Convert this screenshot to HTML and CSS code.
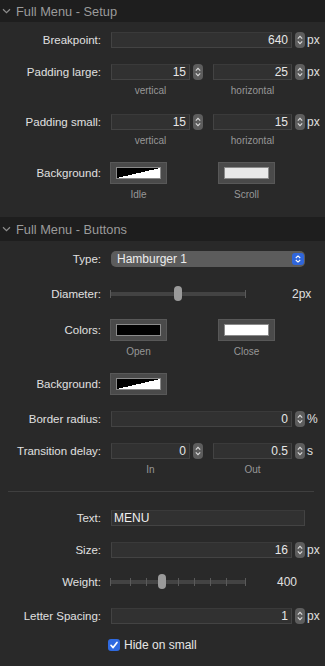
FILE: index.html
```html
<!DOCTYPE html>
<html>
<head>
<meta charset="utf-8">
<link rel="stylesheet" href="styles.css">
</head>
<body>
<div class="panel">
  <div class="header">
    <svg class="chev" width="9" height="6" viewBox="0 0 9 6"><path d="M1 1.2 L4.5 4.6 L8 1.2" fill="none" stroke="#8e8e8e" stroke-width="1.2"/></svg>
    <span>Full Menu - Setup</span>
  </div>
  <div class="section s1">
    <div class="row r-break">
      <div class="label">Breakpoint:</div>
      <div class="field wide">640</div>
      <svg class="stepper" width="10" height="16" viewBox="0 0 10 16"><rect width="10" height="16" rx="4" fill="#5d5d5d"/><path d="M2.8 6.6 L5 4.4 L7.2 6.6 M2.8 9.4 L5 11.6 L7.2 9.4" fill="none" stroke="#dcdcdc" stroke-width="1.1"/></svg>
      <span class="unit">px</span>
    </div>
    <div class="row r-pl">
      <div class="label">Padding large:</div>
      <div class="field half">15</div>
      <svg class="stepper" width="10" height="16" viewBox="0 0 10 16"><rect width="10" height="16" rx="4" fill="#5d5d5d"/><path d="M2.8 6.6 L5 4.4 L7.2 6.6 M2.8 9.4 L5 11.6 L7.2 9.4" fill="none" stroke="#dcdcdc" stroke-width="1.1"/></svg>
      <div class="field half second">25</div>
      <svg class="stepper" width="10" height="16" viewBox="0 0 10 16"><rect width="10" height="16" rx="4" fill="#5d5d5d"/><path d="M2.8 6.6 L5 4.4 L7.2 6.6 M2.8 9.4 L5 11.6 L7.2 9.4" fill="none" stroke="#dcdcdc" stroke-width="1.1"/></svg>
      <span class="unit">px</span>
    </div>
    <div class="subrow">
      <span class="sub half">vertical</span>
      <span class="sub half second">horizontal</span>
    </div>
    <div class="row r-ps">
      <div class="label">Padding small:</div>
      <div class="field half">15</div>
      <svg class="stepper" width="10" height="16" viewBox="0 0 10 16"><rect width="10" height="16" rx="4" fill="#5d5d5d"/><path d="M2.8 6.6 L5 4.4 L7.2 6.6 M2.8 9.4 L5 11.6 L7.2 9.4" fill="none" stroke="#dcdcdc" stroke-width="1.1"/></svg>
      <div class="field half second">15</div>
      <svg class="stepper" width="10" height="16" viewBox="0 0 10 16"><rect width="10" height="16" rx="4" fill="#5d5d5d"/><path d="M2.8 6.6 L5 4.4 L7.2 6.6 M2.8 9.4 L5 11.6 L7.2 9.4" fill="none" stroke="#dcdcdc" stroke-width="1.1"/></svg>
      <span class="unit">px</span>
    </div>
    <div class="subrow">
      <span class="sub half">vertical</span>
      <span class="sub half second">horizontal</span>
    </div>
    <div class="row swrow r-bg1">
      <div class="label">Background:</div>
      <div class="swatch"><div class="inner split"></div></div>
      <div class="swatch second"><div class="inner light"></div></div>
    </div>
    <div class="subrow swsub">
      <span class="sub sw">Idle</span>
      <span class="sub sw second">Scroll</span>
    </div>
  </div>

  <div class="header h2">
    <svg class="chev" width="9" height="6" viewBox="0 0 9 6"><path d="M1 1.2 L4.5 4.6 L8 1.2" fill="none" stroke="#8e8e8e" stroke-width="1.2"/></svg>
    <span>Full Menu - Buttons</span>
  </div>
  <div class="section s2">
    <div class="row r-type">
      <div class="label">Type:</div>
      <div class="popup">
        <span>Hamburger 1</span>
        <svg class="popbtn" width="12" height="12" viewBox="0 0 12 12"><rect width="12" height="12" rx="3" fill="#2f66dc"/><path d="M3.8 5 L6 2.9 L8.2 5 M3.8 7 L6 9.1 L8.2 7" fill="none" stroke="#ffffff" stroke-width="1.1"/></svg>
      </div>
    </div>
    <div class="row r-diam">
      <div class="label">Diameter:</div>
      <div class="slider">
        <div class="track"></div>
        <div class="endtick left"></div>
        <div class="endtick right"></div>
        <div class="knob" style="left:64px"></div>
      </div>
      <span class="value v-diam">2px</span>
    </div>
    <div class="row swrow r-colors">
      <div class="label">Colors:</div>
      <div class="swatch"><div class="inner black"></div></div>
      <div class="swatch second"><div class="inner white"></div></div>
    </div>
    <div class="subrow swsub">
      <span class="sub sw">Open</span>
      <span class="sub sw second">Close</span>
    </div>
    <div class="row swrow r-bg2">
      <div class="label">Background:</div>
      <div class="swatch"><div class="inner split"></div></div>
    </div>
    <div class="row r-radius">
      <div class="label">Border radius:</div>
      <div class="field wide">0</div>
      <svg class="stepper" width="10" height="16" viewBox="0 0 10 16"><rect width="10" height="16" rx="4" fill="#5d5d5d"/><path d="M2.8 6.6 L5 4.4 L7.2 6.6 M2.8 9.4 L5 11.6 L7.2 9.4" fill="none" stroke="#dcdcdc" stroke-width="1.1"/></svg>
      <span class="unit">%</span>
    </div>
    <div class="row r-trans">
      <div class="label">Transition delay:</div>
      <div class="field half">0</div>
      <svg class="stepper" width="10" height="16" viewBox="0 0 10 16"><rect width="10" height="16" rx="4" fill="#5d5d5d"/><path d="M2.8 6.6 L5 4.4 L7.2 6.6 M2.8 9.4 L5 11.6 L7.2 9.4" fill="none" stroke="#dcdcdc" stroke-width="1.1"/></svg>
      <div class="field half second">0.5</div>
      <svg class="stepper" width="10" height="16" viewBox="0 0 10 16"><rect width="10" height="16" rx="4" fill="#5d5d5d"/><path d="M2.8 6.6 L5 4.4 L7.2 6.6 M2.8 9.4 L5 11.6 L7.2 9.4" fill="none" stroke="#dcdcdc" stroke-width="1.1"/></svg>
      <span class="unit">s</span>
    </div>
    <div class="subrow">
      <span class="sub half">In</span>
      <span class="sub half second">Out</span>
    </div>
    <div class="separator"></div>
    <div class="row r-text">
      <div class="label">Text:</div>
      <div class="field textfield">MENU</div>
    </div>
    <div class="row r-size">
      <div class="label">Size:</div>
      <div class="field wide">16</div>
      <svg class="stepper" width="10" height="16" viewBox="0 0 10 16"><rect width="10" height="16" rx="4" fill="#5d5d5d"/><path d="M2.8 6.6 L5 4.4 L7.2 6.6 M2.8 9.4 L5 11.6 L7.2 9.4" fill="none" stroke="#dcdcdc" stroke-width="1.1"/></svg>
      <span class="unit">px</span>
    </div>
    <div class="row r-weight">
      <div class="label">Weight:</div>
      <div class="slider">
        <div class="track"></div>
        <div class="ticks">
          <i></i><i class="t1"></i><i class="t2"></i><i class="t4"></i><i class="t5"></i><i class="t6"></i><i class="t7"></i><i class="t8"></i>
        </div>
        <div class="knob" style="left:48px"></div>
      </div>
      <span class="value v-weight">400</span>
    </div>
    <div class="row r-ls">
      <div class="label">Letter Spacing:</div>
      <div class="field wide">1</div>
      <svg class="stepper" width="10" height="16" viewBox="0 0 10 16"><rect width="10" height="16" rx="4" fill="#5d5d5d"/><path d="M2.8 6.6 L5 4.4 L7.2 6.6 M2.8 9.4 L5 11.6 L7.2 9.4" fill="none" stroke="#dcdcdc" stroke-width="1.1"/></svg>
      <span class="unit">px</span>
    </div>
    <div class="row r-check">
      <svg class="check" width="12" height="12" viewBox="0 0 12 12"><rect width="12" height="12" rx="3" fill="#2f6ae0"/><path d="M3 6.3 L5.1 8.6 L9 3.4" fill="none" stroke="#ffffff" stroke-width="1.7" stroke-linecap="round" stroke-linejoin="round"/></svg>
      <span class="checklabel">Hide on small</span>
    </div>
  </div>
</div>
</body>
</html>
```
FILE: styles.css
```css
html, body {
  margin: 0;
  padding: 0;
  background: #292929;
}
body {
  width: 325px;
  height: 666px;
  overflow: hidden;
  font-family: "Liberation Sans", Arial, sans-serif;
  color: #dcdcdc;
}
.header {
  height: 22px;
  background: #1e1e1e;
  display: flex;
  align-items: center;
  font-size: 12.8px;
  color: #9b9b9b;
}
.header.h2 {
  height: 24px;
}
.chev {
  margin-left: 2px;
  margin-right: 5px;
  flex: none;
}
.section {
  padding-top: 10px;
}
.s1 {
  padding-bottom: 16px;
}
.row {
  display: flex;
  align-items: center;
  height: 16px;
}
.label {
  width: 101px;
  margin-right: 10px;
  flex: none;
  text-align: right;
  font-size: 11.5px;
  color: #e0e0e0;
  white-space: nowrap;
}
.field {
  box-sizing: border-box;
  height: 16px;
  background: #313131;
  border: 1px solid #434343;
  border-top-color: #3a3a3a;
  font-size: 12px;
  color: #e6e6e6;
  text-align: right;
  padding-right: 3px;
  line-height: 14px;
  flex: none;
}
.field.wide {
  width: 181px;
}
.field.half {
  width: 79px;
}
.field.second {
  margin-left: 10px;
}
.stepper {
  margin-left: 3px;
  flex: none;
}
.unit {
  margin-left: 2px;
  font-size: 12px;
  color: #e0e0e0;
}
.subrow {
  display: flex;
  padding-left: 111px;
  height: 12px;
  margin-top: 5px;
}
.sub {
  font-size: 10px;
  line-height: 12px;
  color: #979797;
  text-align: center;
  flex: none;
}
.sub.half {
  width: 79px;
}
.sub.half.second {
  margin-left: 23px;
}
.swsub {
  padding-left: 110px;
}
.sub.sw {
  width: 57px;
}
.sub.sw.second {
  margin-left: 51px;
}
.swrow {
  height: 22px;
}
.swatch {
  box-sizing: border-box;
  width: 57px;
  height: 22px;
  background: #4a4a4a;
  border: 1px solid #585858;
  margin-left: -1px;
  padding: 4px 5px;
  flex: none;
}
.swatch.second {
  margin-left: 51px;
}
.inner {
  box-sizing: border-box;
  width: 100%;
  height: 100%;
  border: 1px solid #8a8a8a;
}
.inner.split {
  background: linear-gradient(to bottom right, #000 50%, #fff 50%);
}
.inner.light {
  background: #e8e8e8;
}
.inner.black {
  background: #000;
}
.inner.white {
  background: #fff;
}
.r-break { margin-top: 0; }
.r-pl { margin-top: 16px; }
.r-ps { margin-top: 17px; }
.r-bg1 { margin-top: 15px; }
.r-diam { margin-top: 19px; }
.r-colors { margin-top: 17px; }
.r-bg2 { margin-top: 15px; }
.r-radius { margin-top: 16px; }
.r-trans { margin-top: 16px; }
.r-text { margin-top: 18px; }
.r-size { margin-top: 16px; }
.r-weight { margin-top: 16px; }
.r-ls { margin-top: 18px; }
.r-check { margin-top: 13px; }

.popup {
  box-sizing: border-box;
  width: 194px;
  height: 16px;
  background: #5c5c5c;
  border-radius: 5px;
  display: flex;
  align-items: center;
  justify-content: space-between;
  padding-left: 6px;
  padding-right: 1px;
  font-size: 12px;
  color: #ececec;
}
.popbtn {
  flex: none;
}
.slider {
  position: relative;
  width: 136px;
  height: 16px;
  margin-left: -1px;
  flex: none;
}
.track {
  position: absolute;
  left: 0;
  right: 0;
  top: 6px;
  height: 4px;
  border-radius: 1px;
  background: #434343;
}
.endtick {
  position: absolute;
  top: 4px;
  width: 1px;
  height: 8px;
  background: #5a5a5a;
}
.endtick.left { left: 0; }
.endtick.right { right: 0; }
.ticks {
  position: absolute;
  left: 0;
  right: 0;
  top: 4px;
  height: 8px;
  display: flex;
}
.ticks i {
  display: block;
  width: 1px;
  height: 8px;
  background: #5a5a5a;
  flex: none;
}
.ticks i.t1 { margin-left: 19px; }
.ticks i.t2 { margin-left: 15px; }
.ticks i.t4 { margin-left: 31px; }
.ticks i.t5 { margin-left: 15px; }
.ticks i.t6 { margin-left: 15px; }
.ticks i.t7 { margin-left: 15px; }
.ticks i.t8 { margin-left: 18px; }
.knob {
  position: absolute;
  top: 0;
  width: 8px;
  height: 15px;
  border-radius: 4px;
  background: #9a9a9a;
}
.value {
  font-size: 12px;
  color: #e0e0e0;
}
.v-diam { margin-left: 46px; }
.v-weight { margin-left: 31px; }
.separator {
  margin: 15px 11px 0 8px;
  height: 1px;
  background: #3f3f3f;
}
.field.textfield {
  width: 194px;
  text-align: left;
  padding-left: 2px;
  color: #f0f0f0;
}
.check {
  margin-left: 108px;
  flex: none;
}
.checklabel {
  margin-left: 4px;
  font-size: 12px;
  color: #e6e6e6;
}
```
